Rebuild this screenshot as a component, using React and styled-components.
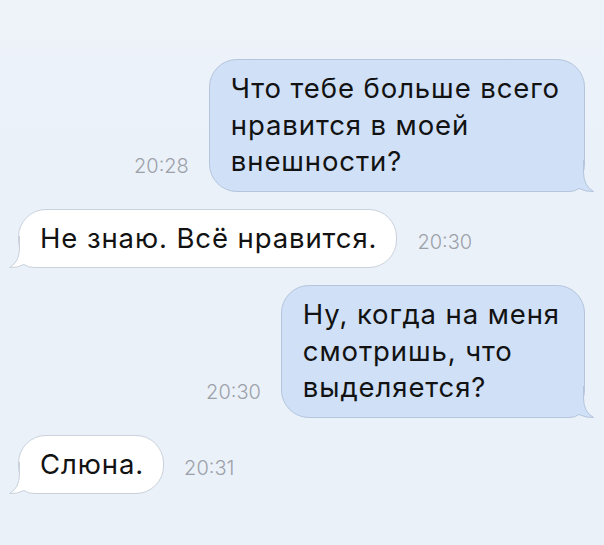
import React from 'react';
import styled, { createGlobalStyle } from 'styled-components';

const GlobalStyle = createGlobalStyle`
  html, body {
    margin: 0;
    padding: 0;
    background: #ebf1f9;
  }
  body {
    font-family: Inter, Roboto, "Noto Sans", "Liberation Sans", sans-serif;
    -webkit-font-smoothing: antialiased;
  }
`;

const Screen = styled.div`
  width: 604px;
  height: 545px;
  overflow: hidden;
  background: linear-gradient(#eef3fa 0, #ebf1f9 140px, #ebf1f9 100%);
`;

const Thread = styled.div`
  display: flex;
  flex-direction: column;
  gap: 17px;
  padding: 59px 19px 0 18px;
`;

const Row = styled.div`
  display: flex;
  flex-direction: ${p => (p.$out ? 'row-reverse' : 'row')};
  justify-content: flex-start;
  align-items: flex-end;
  gap: 20px;
`;

const Bubble = styled.div`
  position: relative;
  padding: 10px ${p => (p.$out ? 24 : 19)}px 11px 21px;
  border: 1px solid ${p => (p.$out ? '#b4c5dc' : '#c9d1dc')};
  border-radius: 28px;
  background: ${p => (p.$out ? '#cfe0f7' : '#ffffff')};
  color: #121212;
  font-size: 27.5px;
  line-height: 36.5px;
  letter-spacing: 0.9px;
  white-space: pre-line;
`;

const BubbleText = styled.span`
  position: relative;
  z-index: 1;
`;

const Tail = styled.svg`
  position: absolute;
  bottom: -1px;
  ${p => (p.$out ? 'right: -11px;' : 'left: -11px; transform: scaleX(-1);')}
  width: 40px;
  height: 32px;
  overflow: visible;
`;

const Time = styled.span`
  flex: none;
  padding-bottom: 16px;
  font-size: 20px;
  line-height: 20px;
  font-weight: 300;
  color: #9ca1a9;
`;

const messages = [
  { out: true, time: '20:28', text: 'Что тебе больше всего\nнравится в моей\nвнешности?' },
  { out: false, time: '20:30', text: 'Не знаю. Всё нравится.' },
  { out: true, time: '20:30', text: 'Ну, когда на меня\nсмотришь, что\nвыделяется?' },
  { out: false, time: '20:31', text: 'Слюна.' },
];

// corner tail, drawn for the right side and mirrored for incoming bubbles
function BubbleTail({ out }) {
  const fill = out ? '#cfe0f7' : '#ffffff';
  const stroke = out ? '#b4c5dc' : '#c9d1dc';
  return (
    <Tail $out={out} viewBox="0 0 40 32">
      <path
        d="M0 31.5 L14 31.5 Q20 31.5 24 28.5 Q31 32 38.5 31.5 Q28.5 26 28.5 12 L28.5 0 L0 0 Z"
        fill={fill}
      />
      <path
        d="M0 31.5 L14 31.5 Q20 31.5 24 28.5 Q31 32 38.5 31.5 Q28.5 26 28.5 12 L28.5 0"
        fill="none"
        stroke={stroke}
        strokeWidth="1"
      />
    </Tail>
  );
}

export default function App() {
  return (
    <>
      <GlobalStyle />
      <Screen>
        <Thread>
          {messages.map((m, i) => (
            <Row key={i} $out={m.out}>
              <Bubble $out={m.out}>
                <BubbleTail out={m.out} />
                <BubbleText>{m.text}</BubbleText>
              </Bubble>
              <Time>{m.time}</Time>
            </Row>
          ))}
        </Thread>
      </Screen>
    </>
  );
}
